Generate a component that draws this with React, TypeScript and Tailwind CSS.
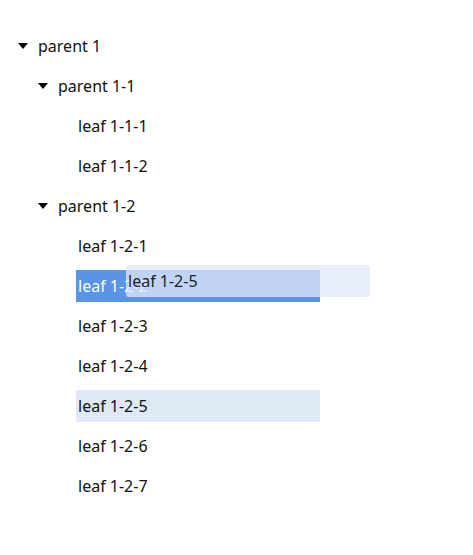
type Node = { title: string; level: number; parent?: boolean; state?: 'selected' | 'hover' }

const nodes: Node[] = [
  { title: 'parent 1', level: 0, parent: true },
  { title: 'parent 1-1', level: 1, parent: true },
  { title: 'leaf 1-1-1', level: 2 },
  { title: 'leaf 1-1-2', level: 2 },
  { title: 'parent 1-2', level: 1, parent: true },
  { title: 'leaf 1-2-1', level: 2 },
  { title: 'leaf 1-2-2', level: 2, state: 'selected' },
  { title: 'leaf 1-2-3', level: 2 },
  { title: 'leaf 1-2-4', level: 2 },
  { title: 'leaf 1-2-5', level: 2, state: 'hover' },
  { title: 'leaf 1-2-6', level: 2 },
  { title: 'leaf 1-2-7', level: 2 },
]

const indentClass = ['w-0', 'w-[20px]', 'w-[40px]']

function Caret() {
  return (
    <svg width="10" height="6" viewBox="0 0 10 6" className="ml-[2px]">
      <path d="M0 0 L10 0 L5 6 Z" fill="#000" />
    </svg>
  )
}

function TreeRow({ node }: { node: Node }) {
  const bg =
    node.state === 'selected'
      ? 'bg-[#5994e5] text-white'
      : node.state === 'hover'
        ? 'bg-[#dfe9f6] text-[#111]'
        : 'text-[#111]'

  return (
    <div className="flex h-8 items-center">
      <div className={`${indentClass[node.level]} shrink-0`} />
      <div className="flex w-5 shrink-0 items-center justify-start">{node.parent && <Caret />}</div>
      <div className={`flex h-8 flex-1 items-center px-[2px] ${bg}`}>
        <span className="whitespace-nowrap">{node.title}</span>
      </div>
    </div>
  )
}

export default function App() {
  return (
    <div className="min-h-[555px] w-[473px] bg-white font-['Noto_Sans','Liberation_Sans',sans-serif] text-[16px]">
      <div className="relative w-[336px] px-4 pt-[30px]">
        <div className="flex flex-col gap-2">
          {nodes.map((n) => (
            <TreeRow key={n.title} node={n} />
          ))}
        </div>

        {/* drag ghost */}
        <div className="absolute left-[126px] top-[265px] flex h-8 w-[244px] items-center rounded-[3px] bg-[rgba(224,232,248,0.76)] px-[2px] text-[#222]">
          <span className="whitespace-nowrap">leaf 1-2-5</span>
        </div>
      </div>
    </div>
  )
}
